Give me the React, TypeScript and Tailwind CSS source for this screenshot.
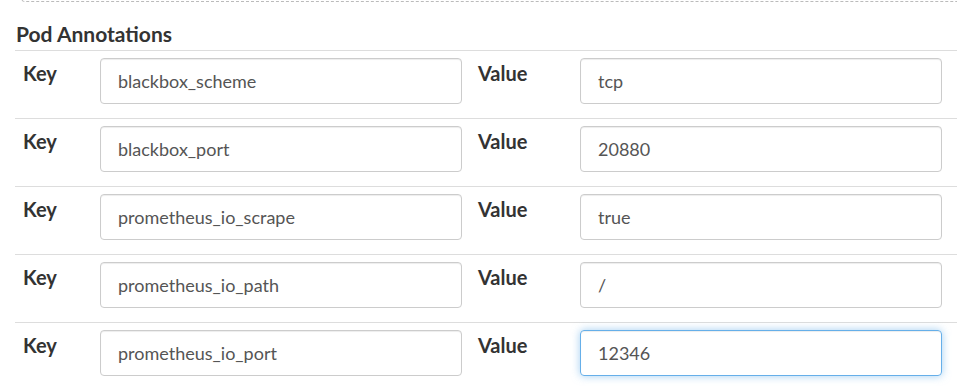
import React from "react";

const rows = [
  { k: "blackbox_scheme", v: "tcp" },
  { k: "blackbox_port", v: "20880" },
  { k: "prometheus_io_scrape", v: "true" },
  { k: "prometheus_io_path", v: "/" },
  { k: "prometheus_io_port", v: "12346", focus: true },
];

const base =
  "w-[362px] h-[46px] rounded-[4px] border flex items-center pl-[17px] text-[18px] text-[#555]";

export default function App() {
  return (
    <div
      className="w-[957px] h-[389px] bg-white overflow-hidden text-[#333]"
      style={{ fontFamily: "Lato, 'Noto Sans', sans-serif" }}
    >
      <div className="ml-[21px] -mt-[20px] h-[22px] border border-dashed border-[#bbb] rounded-[4px] mr-[-10px]" />
      <div className="pl-[15px]">
        <h3 className="pl-[1px] pt-[19px] pb-[4px] text-[21px] font-bold leading-[25px]">Pod Annotations</h3>
        {rows.map((r, i) => (
          <div key={i} className="flex border-t border-[#ddd] pl-[8px] pt-[7px] pb-[14px]">
            <div className="w-[77px] pt-[4px] text-[20px] font-bold leading-[22px]">Key</div>
            <div className={base + " border-[#ccc] shadow-[inset_0_1px_1px_rgba(0,0,0,0.075)]"}>{r.k}</div>
            <div className="w-[102px] ml-[16px] pt-[4px] text-[20px] font-bold leading-[22px]">Value</div>
            <div
              className={
                r.focus
                  ? base + " border-[#66afe9] shadow-[inset_0_1px_1px_rgba(0,0,0,0.075),0_0_8px_rgba(102,175,233,0.6)]"
                  : base + " border-[#ccc] shadow-[inset_0_1px_1px_rgba(0,0,0,0.075)]"
              }
            >
              {r.v}
            </div>
          </div>
        ))}
      </div>
    </div>
  );
}
